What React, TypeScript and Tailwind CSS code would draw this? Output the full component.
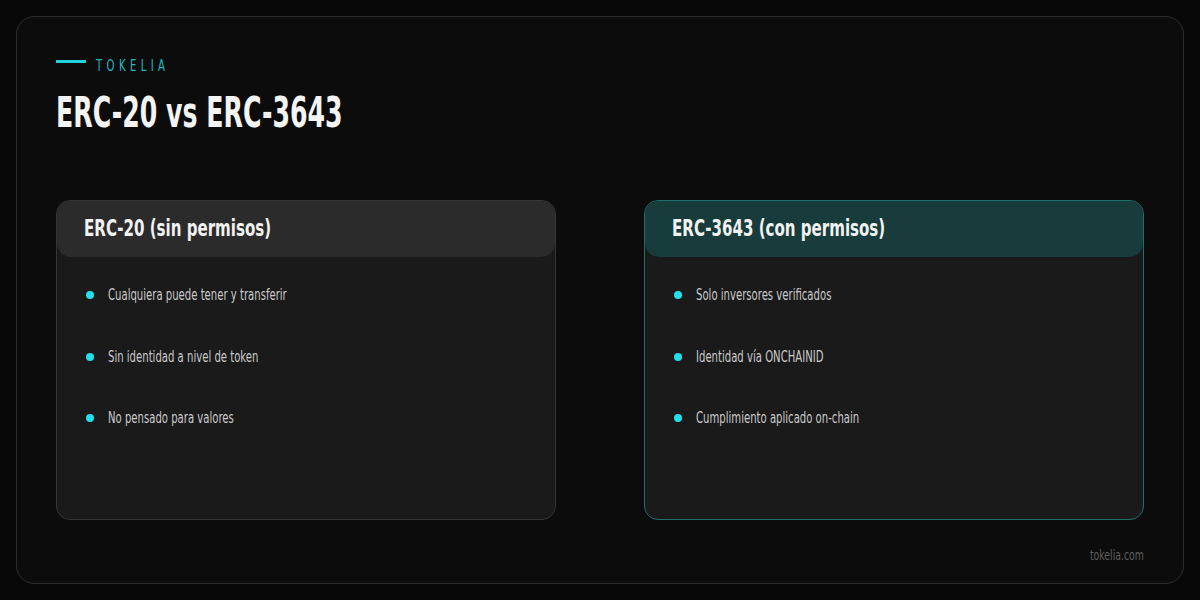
import React from "react";

const FONT = '"DejaVu Sans Condensed", "DejaVu Sans", sans-serif';

function Card({ title, items, accent }: { title: string; items: string[]; accent: boolean }) {
  return (
    <div
      className={`flex h-[320px] w-[500px] flex-col rounded-[14px] border bg-[#1a1a1a] ${
        accent ? "border-[#1f6f6a]" : "border-[#353535]"
      }`}
    >
      <div
        className={`flex h-[56px] items-center rounded-[14px] pl-[27px] ${
          accent ? "bg-[#173c3b]" : "bg-[#2b2b2b]"
        }`}
      >
        <span className="inline-block origin-left scale-x-[0.712] whitespace-nowrap text-[23.5px] font-bold text-[#f2f2f2]">
          {title}
        </span>
      </div>
      <div className="flex flex-col gap-[43.5px] pl-[29px] pt-[29px]">
        {items.map((t) => (
          <div key={t} className="flex h-[18px] items-center gap-[14px]">
            <span className="h-[8px] w-[8px] shrink-0 rounded-full bg-[#22e0e8]" />
            <span className="inline-block origin-left scale-x-[0.68] whitespace-nowrap text-[16.5px] leading-[18px] text-[#cacaca]">
              {t}
            </span>
          </div>
        ))}
      </div>
    </div>
  );
}

export default function App() {
  return (
    <div className="h-[600px] w-[1200px] bg-[#080808] p-[16px]" style={{ fontFamily: FONT }}>
      <div className="flex h-[568px] flex-col rounded-[18px] border border-[#2d2d2d] bg-[#0c0c0c] px-[39px] pt-[41px]">
        <div className="flex h-[16px] items-start gap-[10px]">
          <span className="mt-[2px] h-[3px] w-[30px] bg-[#22d3dc]" />
          <span className="inline-block origin-left scale-x-[0.7] whitespace-nowrap text-[16px] leading-[16px] tracking-[6.3px] text-[#22b8c2]">
            TOKELIA
          </span>
        </div>
        <div className="mt-[15px] h-[48px]">
          <h1 className="inline-block origin-left scale-x-[0.667] whitespace-nowrap text-[42px] font-bold leading-[48px] text-[#f4f4f4]">
            ERC-20 vs ERC-3643
          </h1>
        </div>
        <div className="mt-[63px] flex gap-[88px]">
          <Card
            title="ERC-20 (sin permisos)"
            accent={false}
            items={["Cualquiera puede tener y transferir", "Sin identidad a nivel de token", "No pensado para valores"]}
          />
          <Card
            title="ERC-3643 (con permisos)"
            accent={true}
            items={["Solo inversores verificados", "Identidad vía ONCHAINID", "Cumplimiento aplicado on-chain"]}
          />
        </div>
        <div className="mt-[27px] flex h-[16px] justify-end">
          <span className="inline-block origin-right scale-x-[0.74] whitespace-nowrap text-[14px] leading-[16px] text-[#5f5f5f]">
            tokelia.com
          </span>
        </div>
      </div>
    </div>
  );
}
